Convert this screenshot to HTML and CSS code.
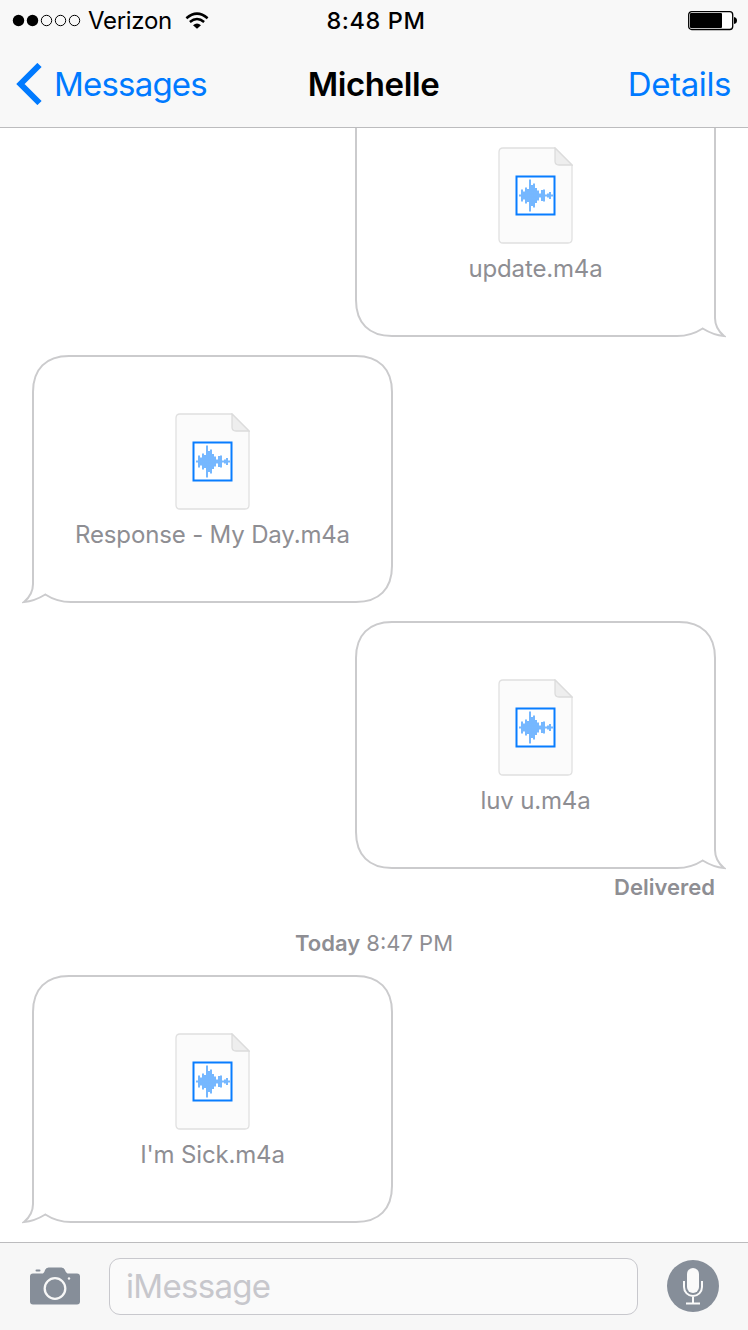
FILE: index.html
```html
<!DOCTYPE html>
<html lang="en">
<head>
    <meta charset="UTF-8">
    <meta name="viewport" content="width=device-width, initial-scale=1.0">
    <title>Messages - Michelle</title>
    <link rel="stylesheet" href="styles.css">
</head>
<body>
    <!-- Shared shapes -->
    <svg class="defs" aria-hidden="true">
        <symbol id="bubble" viewBox="0 0 372 249">
            <path d="M11 37C11 14 24 1 47 1H334C357 1 370 14 370 37V211C370 234 357 247 334 247H49C38 247 31 244.500 23.300 239.500C16 244 9 246.500 2 247C8 242 11 236 11 229Z" fill="#fff" stroke="#cbcbcd" stroke-width="2"/>
        </symbol>
        <symbol id="audio-file" viewBox="0 0 75 97">
            <path d="M5 1H57L74 18V92Q74 96 70 96H5Q1 96 1 92V5Q1 1 5 1Z" fill="#fbfbfb" stroke="#e0e0e0" stroke-width="1.300"/>
            <path d="M57 1V14Q57 18 61 18H74Z" fill="#eee" stroke="#dcdcdc" stroke-width="1.300"/>
            <rect x="18.500" y="29.500" width="38" height="38" fill="#fff" stroke="#087dff" stroke-width="2"/>
            <path d="M22 47.500v2M24 42.500v12M26 44.500v8M28 40.500v16M30 42v13M32 32.500v32M34 38v21M36 36.500v24M38 41v15M40 43.500v10M42 46.500v4M44 43v11M46 42.500v12M48 47.500v2M50 46.500v4M52 45v7M54 47.500v2" stroke="#53a6ff" stroke-width="1.600"/>
        </symbol>
    </svg>

    <header class="header">
        <div class="status-bar">
            <div class="carrier">
                <svg width="70" height="14" viewBox="0 0 70 14">
                    <circle cx="6.500" cy="6.500" r="5.700"/>
                    <circle cx="20.500" cy="6.500" r="5.700"/>
                    <g fill="none" stroke="#000">
                        <circle cx="34.500" cy="6.500" r="5.200"/>
                        <circle cx="48.500" cy="6.500" r="5.200"/>
                        <circle cx="62.500" cy="6.500" r="5.200"/>
                    </g>
                </svg>
                <span class="carrier-name">Verizon</span>
                <svg class="wifi" width="24" height="18" viewBox="0 0 26 19">
                    <path d="M1.500 6.500Q13 -3.500 24.500 6.500M5.300 10.500Q13 4 20.700 10.500" fill="none" stroke="#000" stroke-width="2.700"/>
                    <path d="M8.700 14Q13 10.500 17.300 14L13 18Z"/>
                </svg>
            </div>
            <span class="time">8:48 PM</span>
            <svg class="battery" width="50" height="20" viewBox="0 0 50 20">
                <rect x=".700" y=".700" width="44" height="17.800" rx="3" fill="#fff" stroke="#000" stroke-width="1.300"/>
                <rect x="2" y="2" width="32" height="15" rx="1"/>
                <path d="M46 6Q49 6.500 49 9.500T46 13Z"/>
            </svg>
        </div>
        <nav class="nav">
            <a class="back">
                <svg width="26" height="42" viewBox="0 0 26 42"><path d="M23.500 2L4.500 21L23.500 40" fill="none" stroke="#007aff" stroke-width="6"/></svg>
                <span>Messages</span>
            </a>
            <h1>Michelle</h1>
            <a class="details">Details</a>
        </nav>
    </header>

    <main class="conversation">
        <div class="message sent">
            <svg class="outline"><use href="#bubble"/></svg>
            <svg class="file"><use href="#audio-file"/></svg>
            <span class="filename">update.m4a</span>
        </div>
        <div class="message received">
            <svg class="outline"><use href="#bubble"/></svg>
            <svg class="file"><use href="#audio-file"/></svg>
            <span class="filename">Response - My Day.m4a</span>
        </div>
        <div class="message sent">
            <svg class="outline"><use href="#bubble"/></svg>
            <svg class="file"><use href="#audio-file"/></svg>
            <span class="filename">luv u.m4a</span>
        </div>
        <p class="receipt">Delivered</p>
        <p class="timestamp"><b>Today</b> 8:47 PM</p>
        <div class="message received">
            <svg class="outline"><use href="#bubble"/></svg>
            <svg class="file"><use href="#audio-file"/></svg>
            <span class="filename">I'm Sick.m4a</span>
        </div>
    </main>

    <footer class="composer">
        <svg class="camera" width="50" height="38" viewBox="0 0 50 38">
            <path d="M3 6.500H13Q14.500 5.500 15 3Q16 .500 18.500 .500H31.500Q34 .500 35 3Q35.500 5.500 37.500 6.500H47Q50 6.500 50 9.500V34.500Q50 37.500 47 37.500H3Q0 37.500 0 34.500V9.500Q0 6.500 3 6.500Z"/>
            <rect x="5.500" y="2.500" width="5" height="2" rx="1"/>
            <circle cx="25" cy="21.500" r="10.300" fill="none" stroke="#f7f7f7" stroke-width="2.300"/>
            <circle cx="39" cy="11.500" r="1.200" fill="#f7f7f7"/>
        </svg>
        <div class="field">iMessage</div>
        <svg class="mic" width="52" height="52" viewBox="0 0 52 52">
            <circle cx="26" cy="26" r="26"/>
            <rect x="20" y="8" width="12" height="25" rx="6" fill="#fafafa"/>
            <path d="M17 21V27A9 9 0 0 0 35 27V21M26 36V43M19 43.500H33" fill="none" stroke="#fafafa" stroke-width="2"/>
        </svg>
    </footer>
</body>
</html>
```
FILE: styles.css
```css
* {
    box-sizing: border-box;
}

body {
    margin: 0;
    height: 1330px;
    display: flex;
    flex-direction: column;
    background: #fff;
    font-family: Inter, "Liberation Sans", sans-serif;
    overflow: hidden;
}

svg {
    display: block;
    flex: none;
}

.defs {
    position: absolute;
    width: 0;
    height: 0;
}

/* Header */
.header {
    flex: none;
    height: 128px;
    background: #f8f8f8;
    border-bottom: 1px solid #bcbcbe;
}

.status-bar,
.nav {
    display: grid;
    grid-template-columns: 1fr auto 1fr;
    align-items: center;
}

.status-bar {
    height: 41px;
    padding: 0 10px 0 12px;
    font-size: 24px;
}

.carrier {
    display: flex;
    align-items: center;
}

.carrier-name {
    margin-left: 6px;
    letter-spacing: -0.3px;
}

.wifi {
    margin-left: 13px;
}

.time {
    font-size: 23.5px;
    font-weight: 500;
    letter-spacing: 0.6px;
    margin-left: 2px;
}

.battery {
    justify-self: end;
}

.nav {
    height: 86px;
    padding: 0 17px 0 16px;
    font-size: 33px;
    line-height: 40px;
    color: #007aff;
}

.back {
    display: flex;
    align-items: center;
    gap: 12px;
    letter-spacing: -0.8px;
}

.nav h1 {
    margin: 0;
    font-size: 33px;
    font-weight: 600;
    letter-spacing: -0.4px;
    color: #000;
}

.details {
    justify-self: end;
    letter-spacing: -0.4px;
}

/* Conversation */
.conversation {
    flex: 1;
    min-height: 0;
    display: flex;
    flex-direction: column;
    justify-content: flex-end;
    padding: 0 22px 18px;
    color: #8e8e93;
    overflow: hidden;
}

.message {
    position: relative;
    flex: none;
    width: 372px;
    height: 249px;
    display: flex;
    flex-direction: column;
    align-items: center;
    padding-top: 58px;
}

.message + .message {
    margin-top: 17px;
}

.received {
    padding-left: 9px;
}

.sent {
    align-self: flex-end;
    padding-right: 9px;
}

.outline {
    position: absolute;
    top: 0;
    left: 0;
    width: 372px;
    height: 249px;
}

.sent .outline {
    transform: scaleX(-1);
}

.file {
    position: relative;
    width: 75px;
    height: 97px;
}

.filename {
    position: relative;
    margin-top: 10px;
    font-size: 24px;
    line-height: 30px;
    letter-spacing: -0.15px;
}

.receipt {
    margin: 0;
    flex: none;
    padding-right: 11px;
    font-size: 22px;
    font-weight: 600;
    line-height: 35px;
    height: 36px;
    text-align: right;
}

.timestamp {
    margin: 0;
    flex: none;
    padding: 22px 0 17px;
    font-size: 22px;
    line-height: 30px;
    text-align: center;
}

.timestamp b {
    font-weight: 600;
}

/* Composer */
.composer {
    flex: none;
    height: 88px;
    display: flex;
    align-items: center;
    padding: 0 29px 1px 30px;
    background: #f7f7f7;
    border-top: 1px solid #bcbcbe;
}

.camera,
.mic {
    fill: #868e99;
}

.field {
    flex: 1;
    height: 57px;
    margin: 0 29px;
    padding-left: 16px;
    font-size: 33px;
    line-height: 54px;
    letter-spacing: -0.7px;
    color: #c7c7cc;
    background: #fafafa;
    border: 1.5px solid #c8c8cd;
    border-radius: 11px;
}
```
